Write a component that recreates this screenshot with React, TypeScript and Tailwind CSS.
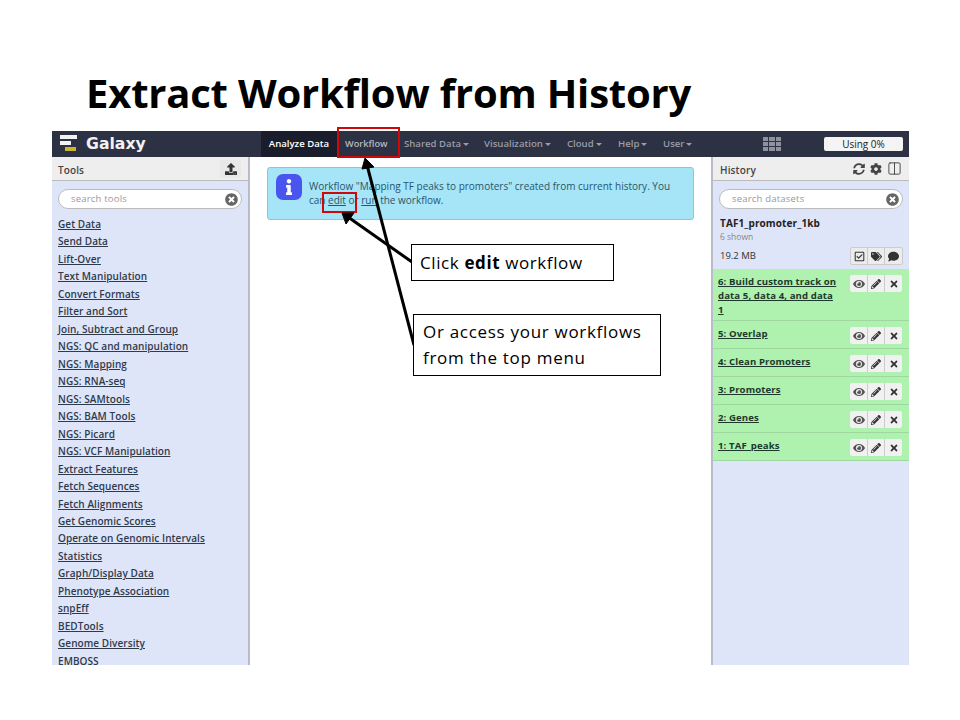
import React from 'react';
import { Columns2 } from 'lucide-react';
import {
  FaComment,
  FaCog,
  FaEye,
  FaInfo,
  FaPencilAlt,
  FaRegCheckSquare,
  FaSyncAlt,
  FaTags,
  FaTimes,
  FaTimesCircle,
  FaUpload,
} from 'react-icons/fa';

const tools = [
  'Get Data', 'Send Data', 'Lift-Over', 'Text Manipulation', 'Convert Formats', 'Filter and Sort',
  'Join, Subtract and Group', 'NGS: QC and manipulation', 'NGS: Mapping', 'NGS: RNA-seq', 'NGS: SAMtools',
  'NGS: BAM Tools', 'NGS: Picard', 'NGS: VCF Manipulation', 'Extract Features', 'Fetch Sequences',
  'Fetch Alignments', 'Get Genomic Scores', 'Operate on Genomic Intervals', 'Statistics', 'Graph/Display Data',
  'Phenotype Association', 'snpEff', 'BEDTools', 'Genome Diversity', 'EMBOSS',
];

const datasets = ['5: Overlap', '4: Clean Promoters', '3: Promoters', '2: Genes', '1: TAF_peaks'];

const menu = [
  { label: 'Shared Data', className: 'w-[80px]' },
  { label: 'Visualization', className: 'w-[83px]' },
  { label: 'Cloud', className: 'w-[51px]' },
  { label: 'Help', className: 'w-[45px]' },
  { label: 'User', className: 'w-[40px]' },
];

function Logo() {
  return (
    <svg width="20" height="17" viewBox="0 0 20 17" className="ml-[8px]">
      <rect x="0" y="0" width="17" height="4" fill="#f2f2f2" />
      <rect x="0" y="6" width="11" height="4" fill="#f2f2f2" />
      <rect x="5" y="12" width="11" height="4" fill="#c9b82e" />
    </svg>
  );
}

function SearchBox({ placeholder }: { placeholder: string }) {
  return (
    <div className="h-[20px] rounded-full bg-white border border-[#bbb] flex items-center justify-between pl-[12px] pr-[3px]">
      <span className="text-[9.5px] text-[#999] tracking-[0.2px]">{placeholder}</span>
      <FaTimesCircle className="text-[#666] text-[13px]" />
    </div>
  );
}

function ActionButtons() {
  return (
    <div className="flex shrink-0 h-[17px] rounded-[2px] bg-[#f1f1f1] text-[#333] text-[10px]">
      <span className="w-[18px] flex items-center justify-center border-r border-[#ccc]"><FaEye className="text-[#555] text-[12px]" /></span>
      <span className="w-[17px] flex items-center justify-center border-r border-[#ccc]"><FaPencilAlt /></span>
      <span className="w-[17px] flex items-center justify-center"><FaTimes /></span>
    </div>
  );
}

function DatasetRow({ name }: { name: string }) {
  return (
    <div className="h-[28px] border-b border-[#9fd89f] bg-[#aff1af] flex justify-between pl-[5px] pr-[7px] pt-[6px]">
      <span className="underline font-bold text-[9.6px] leading-[14px] tracking-[0.1px] text-[#1c3a2c]">{name}</span>
      <ActionButtons />
    </div>
  );
}

export default function App() {
  return (
    <div className="relative w-[960px] h-[720px] overflow-hidden bg-white text-black font-['Open_Sans',sans-serif]">
      <h1 className="pt-[65px] pl-[86px] h-[131px] text-[40px] leading-[56px] font-bold tracking-[-0.2px]">
        Extract Workflow from History
      </h1>

      <div className="ml-[52px] w-[857px] h-[534px] flex flex-col overflow-hidden">
        {/* Masthead */}
        <div className="h-[26px] shrink-0 bg-[#2c3143] flex items-center text-[9.6px] font-semibold">
          <div className="w-[209px] flex items-center gap-[6px]">
            <Logo />
            <span className="text-[15.7px] font-bold text-[#f2f2f2] font-['DejaVu_Sans',sans-serif]">Galaxy</span>
          </div>
          <div className="w-[76px] h-full bg-[#1a1d2b] text-white flex items-center justify-center">Analyze Data</div>
          <div className="w-[67px] pl-[8px] text-[9.2px] text-[#b8b8c0]">Workflow</div>
          {menu.map((item) => (
            <div key={item.label} className={`${item.className} text-[#9a9ca8] flex items-center gap-[2px]`}>
              {item.label}
              <span className="border-x-[3px] border-x-transparent border-t-[3px] border-t-[#9a9ca8] mt-[1px]" />
            </div>
          ))}
          <div className="ml-[60px] grid grid-cols-3 gap-[1px] w-[18px]">
            {Array.from({ length: 9 }).map((_, i) => (
              <span key={i} className="h-[4px] bg-[#8f919c]" />
            ))}
          </div>
          <div className="ml-[43px] w-[79px] h-[14px] rounded-[2px] bg-[#f4f4f4] text-[#222] font-normal text-[10px] flex items-center justify-center">
            Using 0%
          </div>
        </div>

        <div className="flex flex-1 min-h-0">
          {/* Tools */}
          <aside className="w-[198px] shrink-0 border-r-2 border-[#b9bcc9] bg-[#dfe5f9] flex flex-col">
            <div className="h-[24px] shrink-0 bg-[#eeeeee] border-b border-[#bbb] flex items-center justify-between pl-[6px] pr-[7px]">
              <span className="text-[10px] font-semibold text-[#444] tracking-[0.1px] pt-[3px]">Tools</span>
              <span className="w-[21px] h-[18px] rounded-[2px] bg-[#e8e8e8] flex items-center justify-center">
                <FaUpload className="text-[#333] text-[12px]" />
              </span>
            </div>
            <div className="px-[6px] pt-[8px]">
              <SearchBox placeholder="search tools" />
              <div className="mt-[7px]">
                {tools.map((tool) => (
                  <div key={tool} className="h-[17.48px] leading-[17.48px] text-[10px] font-semibold text-[#2f3a4a] tracking-[0.07px] underline whitespace-nowrap">
                    {tool}
                  </div>
                ))}
              </div>
            </div>
          </aside>

          {/* Center */}
          <main className="flex-1 bg-white pl-[17px] pr-[17px] pt-[10px]">
            <div className="h-[53px] rounded-[3px] bg-[#a6e4f7] border border-[#8cc6d8] flex pl-[8px] pt-[6px]">
              <span className="w-[26px] h-[26px] shrink-0 rounded-[7px] bg-[#4a55f0] flex items-center justify-center">
                <FaInfo className="text-white text-[16px]" />
              </span>
              <p className="ml-[7px] mt-[5px] text-[10px] leading-[14px] text-[#28566b] whitespace-nowrap">
                Workflow "Mapping TF peaks to promoters" created from current history. You
                <br />
                can <span className="underline">edit</span> or <span className="underline">run</span> the workflow.
              </p>
            </div>
          </main>

          {/* History */}
          <aside className="w-[198px] shrink-0 border-l-2 border-[#b9bcc9] bg-[#dfe5f9] flex flex-col">
            <div className="h-[24px] shrink-0 bg-[#eeeeee] border-b border-[#bbb] flex items-center justify-between pl-[7px] pr-[7px]">
              <span className="text-[10px] font-semibold text-[#444] tracking-[0.15px] pt-[3px]">History</span>
              <div className="flex items-center gap-[5px] text-[#444] text-[12px]">
                <FaSyncAlt />
                <FaCog />
                <Columns2 size={15} strokeWidth={1.5} />
              </div>
            </div>
            <div className="px-[6px] pt-[8px]">
              <SearchBox placeholder="search datasets" />
              <div className="mt-[7px] pl-[1px] text-[10px] font-bold leading-[14px] tracking-[0.1px] text-[#222]">TAF1_promoter_1kb</div>
              <div className="pl-[1px] text-[8.5px] leading-[14px] text-[#888]">6 shown</div>
              <div className="mt-[3px] flex items-center justify-between h-[18px]">
                <span className="pl-[1px] text-[9.5px] text-[#333]">19.2 MB</span>
                <div className="flex h-[18px] rounded-[2px] bg-[#ececec] border border-[#ccc] text-[#333] text-[11px]">
                  <span className="w-[17px] flex items-center justify-center border-r border-[#ccc]"><FaRegCheckSquare /></span>
                  <span className="w-[17px] flex items-center justify-center border-r border-[#ccc]"><FaTags /></span>
                  <span className="w-[17px] flex items-center justify-center"><FaComment /></span>
                </div>
              </div>
            </div>
            <div className="mt-[4px] border-b border-[#9fd89f] bg-[#aff1af] h-[52px] flex justify-between pl-[5px] pr-[7px] pt-[6px]">
              <span className="w-[122px] underline font-bold text-[9.6px] leading-[14px] tracking-[0.1px] text-[#1c3a2c]">
                6: Build custom track on data 5, data 4, and data 1
              </span>
              <ActionButtons />
            </div>
            {datasets.map((name) => (
              <DatasetRow key={name} name={name} />
            ))}
          </aside>
        </div>
      </div>

      {/* Red highlights */}
      <div className="absolute left-[337px] top-[127px] w-[63px] h-[31px] border-2 border-[#cc0a0a]" />
      <div className="absolute left-[322px] top-[192px] w-[35px] h-[21px] border-2 border-[#cc0a0a]" />

      {/* Callout arrows */}
      <svg className="absolute left-0 top-0" width="960" height="720" viewBox="0 0 960 720">
        <path d="M412 262 L348 217" stroke="#000" strokeWidth="3" fill="none" />
        <path d="M342 213 L354 213 L346 224 Z" fill="#000" stroke="#000" />
        <path d="M414 345 L367 165" stroke="#000" strokeWidth="3" fill="none" />
        <path d="M365 158 L374 167 L362 169 Z" fill="#000" stroke="#000" />
      </svg>

      {/* Callouts */}
      <div className="absolute left-[411px] top-[244px] w-[203px] h-[37px] border border-black bg-white pl-[8px] text-[17px] leading-[35px] tracking-[0.6px]">
        Click <span className="font-bold">edit</span> workflow
      </div>
      <div className="absolute left-[413px] top-[314px] w-[248px] h-[62px] border border-black bg-white pl-[9px] pt-[4px] text-[17px] leading-[26px] tracking-[0.7px]">
        Or access your workflows
        <br />
        from the top menu
      </div>
    </div>
  );
}
